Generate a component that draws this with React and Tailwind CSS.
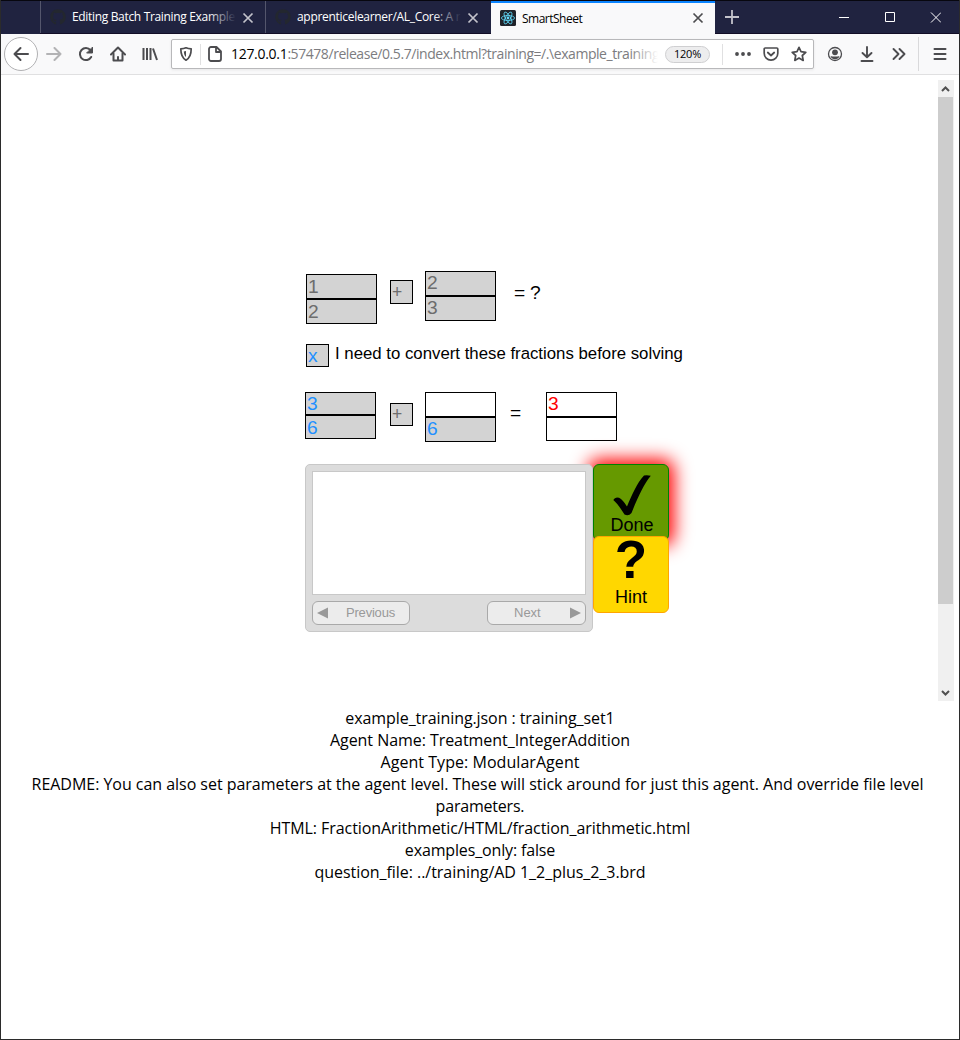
import React from "react";
import { FaGithub } from "react-icons/fa";

const Cross = ({ className }) => (
  <svg width="12" height="12" viewBox="0 0 12 12" className={className}>
    <path d="M1.5 1.5l9 9M10.5 1.5l-9 9" stroke="currentColor" strokeWidth="1.7" fill="none" />
  </svg>
);

const Icon = ({ children, className = "" }) => (
  <svg width="16" height="16" viewBox="0 0 16 16" fill="none" stroke="#4c4c4f" strokeWidth="2" strokeLinecap="round" strokeLinejoin="round" className={"shrink-0 " + className}>
    {children}
  </svg>
);

function Tab({ title, textClass }) {
  return (
    <div className="flex h-full shrink-0 items-center border-l border-[#54566c] pl-[9px] text-white">
      <FaGithub size={16} color="#23272f" className="shrink-0" />
      <div className="relative ml-[6px] w-[164px] overflow-hidden whitespace-nowrap">
        <span className={textClass}>{title}</span>
        <div className="absolute inset-y-0 right-0 w-[28px] bg-linear-to-r from-transparent to-[#202340]" />
      </div>
      <Cross className="ml-[6px] mt-[2px] shrink-0 text-[#c3c3cb]" />
    </div>
  );
}

function TabStrip() {
  return (
    <div className="flex h-[34px] border-t border-[#07070f] bg-[#202340] font-['Open_Sans',sans-serif] text-[12px] leading-[18px]">
      <div className="w-[39px] shrink-0" />
      <div className="flex h-[33px] w-[225px] shrink-0 border-b border-[#120d26]">
        <Tab title="Editing Batch Training Example" textClass="tracking-[-0.33px]" />
      </div>
      <div className="flex h-[33px] w-[226px] shrink-0 border-b border-[#120d26]">
        <Tab title="apprenticelearner/AL_Core: A re" textClass="tracking-[-0.3px]" />
      </div>
      <div className="flex h-[33px] w-[224px] shrink-0 items-center border-t-2 border-[#0a84ff] bg-[#f9f9fa] pl-[9px] text-black">
        <svg width="16" height="16" viewBox="0 0 16 16" className="mt-[-2px] shrink-0">
          <rect width="16" height="16" rx="1.500" fill="#20232a" />
          <g fill="none" stroke="#61dafb" strokeWidth="0.8">
            <ellipse cx="8" cy="8" rx="6.6" ry="2.5" />
            <ellipse cx="8" cy="8" rx="6.6" ry="2.5" transform="rotate(60 8 8)" />
            <ellipse cx="8" cy="8" rx="6.6" ry="2.5" transform="rotate(120 8 8)" />
          </g>
          <circle cx="8" cy="8" r="1.4" fill="#61dafb" />
        </svg>
        <span className="ml-[6px] w-[170px] tracking-[-0.5px]">SmartSheet</span>
        <Cross className="mt-[-1px] text-[#4c4c4f]" />
      </div>
      <div className="flex h-[33px] flex-1 items-center border-b border-[#120d26] text-[#c3c3cb]">
        <svg width="16" height="16" viewBox="0 0 16 16" className="ml-[9px]">
          <path d="M8 1v14M1 8h14" stroke="currentColor" strokeWidth="1.8" />
        </svg>
        <svg width="102" height="12" viewBox="0 0 102 12" fill="none" stroke="#fff" className="ml-[99px]">
          <path d="M0 6.5h10M46.500 1.500h9v9h-9zM92 1.500l10 10M102 1.500l-10 10" />
        </svg>
      </div>
    </div>
  );
}

function Toolbar() {
  return (
    <div className="flex h-[41px] items-center border-b border-[#e0e0e1] bg-[#f9f9fa] font-['Open_Sans',sans-serif]">
      <div className="ml-[3px] flex h-[34px] w-[34px] shrink-0 items-center justify-center rounded-full border border-[#b1b1b3] bg-white">
        <Icon><path d="M15 8H1.500M7.500 2l-6 6 6 6" /></Icon>
      </div>
      <Icon className="ml-2 opacity-40"><path d="M1 8h13.500M8.500 2l6 6-6 6" /></Icon>
      <Icon className="ml-4">
        <path d="M13.200 11A6 6 0 1 1 12.500 4.200" />
        <path d="M14.500 1.500v5.500H9z" fill="#4c4c4f" stroke="#4c4c4f" strokeWidth="1" />
      </Icon>
      <Icon className="ml-4">
        <path d="M1 8.500l7-7 7 7" />
        <path d="M3.500 7.500v7h9v-7M8 14v-3" strokeWidth="2" />
      </Icon>
      <Icon className="ml-4">
        <path d="M1.500 2v12M5 2v12M8.500 2v12M11 2.500l4 11.500" strokeWidth="2" strokeLinecap="butt" />
      </Icon>
      <div className="ml-[13px] flex h-[30px] w-[643px] shrink-0 items-center rounded-[2px] border border-[#b8b8ba] bg-white shadow-[0_1px_3px_rgba(0,0,0,0.08)]">
        <Icon className="ml-[6px]">
          <path d="M8 1.800c2 .9 3.500 1 5.200 1 0 5.200-.7 9-5.200 11.400C3.500 11.800 2.800 8 2.800 2.800c1.700 0 3.200-.1 5.200-1z" strokeWidth="1.700" />
          <path d="M8 5v6c-1.500-1.300-2-3-2.200-5.500C6.500 5.400 7.300 5.300 8 5z" fill="#4c4c4f" stroke="none" />
        </Icon>
        <div className="ml-[6px] h-[21px] w-px bg-[#e0e0e1]" />
        <Icon className="ml-[6px]">
          <path d="M4 1h5.500L14 5.500V13a2 2 0 0 1-2 2H4a2 2 0 0 1-2-2V3a2 2 0 0 1 2-2zM9 1.500V6h4.500" strokeWidth="1.800" />
        </Icon>
        <div className="relative ml-[8px] w-[427px] overflow-hidden whitespace-nowrap text-[14px] leading-5 tracking-[-0.44px] text-[#7c7c80]">
          <span className="tracking-[-0.3px] text-black">127.0.0.1</span>:57478/release/0.5.7/index.html?training=/.\example_training
          <div className="absolute inset-y-0 right-0 w-[28px] bg-linear-to-r from-transparent to-white" />
        </div>
        <div className="ml-[7px] flex h-[17px] w-[45px] shrink-0 items-center justify-center rounded-full border border-[#cfcfd1] bg-[#ededee] text-[11px] tracking-[-0.2px] text-black">120%</div>
        <div className="ml-[12px] h-[21px] w-px bg-[#e0e0e1]" />
        <Icon className="ml-[12px]">
          <path d="M2 8h.01M8 8h.01M14 8h.01" strokeWidth="3.800" />
        </Icon>
        <Icon className="ml-3">
          <path d="M2.200 2h11.600a1 1 0 0 1 1 1v4.300a6.800 6.800 0 0 1-13.600 0V3a1 1 0 0 1 1-1z" strokeWidth="1.700" />
          <path d="M4.800 6.500L8 9.500l3.200-3" strokeWidth="1.800" />
        </Icon>
        <Icon className="ml-3">
          <path d="M8 1.300l2 4.400 4.800.6-3.500 3.200.9 4.900L8 12l-4.200 2.400.9-4.900L1.200 6.300 6 5.700z" strokeWidth="1.700" />
        </Icon>
      </div>
      <Icon className="ml-[13px]">
        <circle cx="8" cy="8" r="6.500" strokeWidth="1.300" />
        <circle cx="8" cy="6.300" r="2.900" fill="#4c4c4f" stroke="none" />
        <path d="M3.500 10.200c1.500 0 2.300.4 4.500.4s3-.4 4.500-.4c-.5 1.800-2.500 3.100-4.500 3.100s-4-1.300-4.500-3.100z" fill="#4c4c4f" stroke="none" />
      </Icon>
      <Icon className="ml-4"><path d="M8 1v10M3.500 7L8 11.300 12.500 7M2.500 15h11" strokeWidth="1.900" /></Icon>
      <Icon className="ml-4"><path d="M2.500 3l5 5-5 5M8.500 3l5 5-5 5" strokeWidth="1.900" /></Icon>
      <div className="ml-[11px] h-[34px] w-px bg-[#d9d9db]" />
      <Icon className="ml-[13px]"><path d="M2.500 3h11M2.500 8h11M2.500 13h11" /></Icon>
    </div>
  );
}

function Cell({ value = "", className }) {
  return (
    <div className={"border border-black pl-px text-[19.200px] " + className}>{value}</div>
  );
}

function Plus({ className }) {
  return (
    <div className={"w-[23px] shrink-0 border border-black bg-[#d3d3d3] pl-px text-[17.500px] text-[#6d6d6d] " + className}>+</div>
  );
}

const given = "bg-[#d3d3d3] text-[#6d6d6d]";
const solved = "bg-[#d3d3d3] text-[#1e90ff]";

function Tutor() {
  return (
    <div className="ml-[304px] w-[400px] font-['Liberation_Sans',Arial,sans-serif] text-black">
      <div className="flex h-[73px] items-start pl-px">
        <div className="mt-[3px] w-[71px]">
          <Cell value="1" className={"h-[25px] leading-[23px] " + given} />
          <Cell value="2" className={"h-[25px] leading-[23px] " + given} />
        </div>
        <Plus className="ml-[13px] mt-[9px] h-[24px] leading-[22px]" />
        <div className="ml-[12px] w-[71px]">
          <Cell value="2" className={"h-[25px] leading-[21px] " + given} />
          <Cell value="3" className={"h-[25px] leading-[21px] " + given} />
        </div>
        <div className="ml-[18px] mt-[11px] text-[19.200px] leading-[22px] tracking-[-0.3px]">= ?</div>
      </div>
      <div className="flex h-[48px] items-start pl-px">
        <div className="h-[23px] w-[23px] border border-black bg-[#d3d3d3] pl-px text-[19.200px] leading-[22px] text-[#1e90ff]">x</div>
        <div className="ml-[6px] whitespace-nowrap text-[16.800px] leading-[19px]">I need to convert these fractions before solving</div>
      </div>
      <div className="flex h-[72px] items-start">
        <div className="w-[71px]">
          <Cell value="3" className={"h-[23px] leading-[21px] " + solved} />
          <Cell value="6" className={"h-[24px] leading-[23px] " + solved} />
        </div>
        <Plus className="ml-[14px] mt-[11px] h-[23px] leading-[20px]" />
        <div className="ml-[12px] w-[71px]">
          <Cell className="h-[25px] bg-white" />
          <Cell value="6" className={"h-[25px] leading-[21px] " + solved} />
        </div>
        <div className="ml-[14px] mt-[10px] w-[36px] text-[19.200px] leading-[22px]">=</div>
        <div className="w-[71px]">
          <Cell value="3" className="h-[25px] bg-white leading-[21px] text-[#ff0000]" />
          <Cell className="h-[24px] bg-white" />
        </div>
      </div>
      <div className="flex items-start">
        <div className="relative z-10 h-[168px] w-[288px] shrink-0 rounded-[5px] border border-[#c8c8c8] bg-[#dcdcdc] p-[6px]">
          <div className="h-[124px] border border-[#c8c8c8] bg-white" />
          <div className="mt-[6px] flex justify-between text-[13px] text-[#999]">
            <div className="flex h-[24px] w-[98px] items-center rounded-[6px] border border-[#a9a9a9] bg-[#ececec] pl-[4px]">
              <svg width="11" height="12" viewBox="0 0 11 12"><path d="M0 6L11 .5v11z" fill="#999" /></svg>
              <span className="ml-[18px] tracking-[-0.2px]">Previous</span>
            </div>
            <div className="flex h-[24px] w-[99px] items-center justify-between rounded-[6px] border border-[#a9a9a9] bg-[#ececec] pl-[26px] pr-[4px]">
              <span>Next</span>
              <svg width="11" height="12" viewBox="0 0 11 12"><path d="M11 6L0 .5v11z" fill="#999" /></svg>
            </div>
          </div>
        </div>
        <div className="w-[76px] text-center text-[18px] leading-[20px]">
          <div className="h-[77px] rounded-[6px] border border-[#008000] bg-[#669900] shadow-[0_0_18px_5px_#ff0000]">
            <svg width="38" height="41" viewBox="0 0 38 41" className="ml-[19px] mt-[10px]">
              <path d="M31 .6Q34 0 37.800 .8C31 9 25 22 18.500 38Q15.500 41.500 11.500 39.500C8 34 4 28 .3 25Q2 21.500 6 22.800Q10 25 14 31.500C19 20 24 8 31 .6z" fill="#000" />
            </svg>
            <div className="mt-[-1px] pl-[2px]">Done</div>
          </div>
          <div className="relative mt-[-5px] h-[77px] rounded-[6px] border border-[#ffa500] bg-[#ffd700]">
            <div className="h-[50px] text-[53px] font-bold leading-[46px]">?</div>
            <div>Hint</div>
          </div>
        </div>
      </div>
    </div>
  );
}

function Details() {
  return (
    <div className="mt-[6px] text-center font-['Open_Sans',sans-serif] text-[16px] leading-[22px] text-black">
      <div className="tracking-[-0.08px]">example_training.json : training_set1</div>
      <div className="tracking-[-0.05px]">Agent Name: Treatment_IntegerAddition</div>
      <div className="tracking-[0.05px]">Agent Type: ModularAgent</div>
      <div className="mx-auto w-[900px] pr-[5px] tracking-[-0.035px]"><span className="whitespace-nowrap">README: You can also set parameters at the agent level. These will stick around for just this agent. And override file level</span></div>
      <div className="tracking-[-0.2px]">parameters.</div>
      <div className="tracking-[-0.07px]">HTML: FractionArithmetic/HTML/fraction_arithmetic.html</div>
      <div className="tracking-[-0.15px]">examples_only: false</div>
      <div className="tracking-[-0.04px]">question_file: ../training/AD 1_2_plus_2_3.brd</div>
    </div>
  );
}

export default function App() {
  return (
    <div className="h-[1040px] w-[960px] overflow-hidden border-x border-b border-[#2b2b2b] bg-white">
      <TabStrip />
      <Toolbar />
      <div className="mt-[5px] flex h-[621px] justify-between">
        <div className="pt-[191px]"><Tutor /></div>
        <div className="mr-[5px] flex w-[16px] flex-col items-center bg-[#f0f0f0]">
          <svg width="16" height="17" viewBox="0 0 16 17"><path d="M4 11L7.500 7.500 11 11" fill="none" stroke="#505050" strokeWidth="2" /></svg>
          <div className="h-[507px] w-[15px] self-start bg-[#cdcdcd]" />
          <div className="flex-1" />
          <svg width="16" height="17" viewBox="0 0 16 17"><path d="M4 7l3.500 3.500L11 7" fill="none" stroke="#505050" strokeWidth="2" /></svg>
        </div>
      </div>
      <Details />
    </div>
  );
}
